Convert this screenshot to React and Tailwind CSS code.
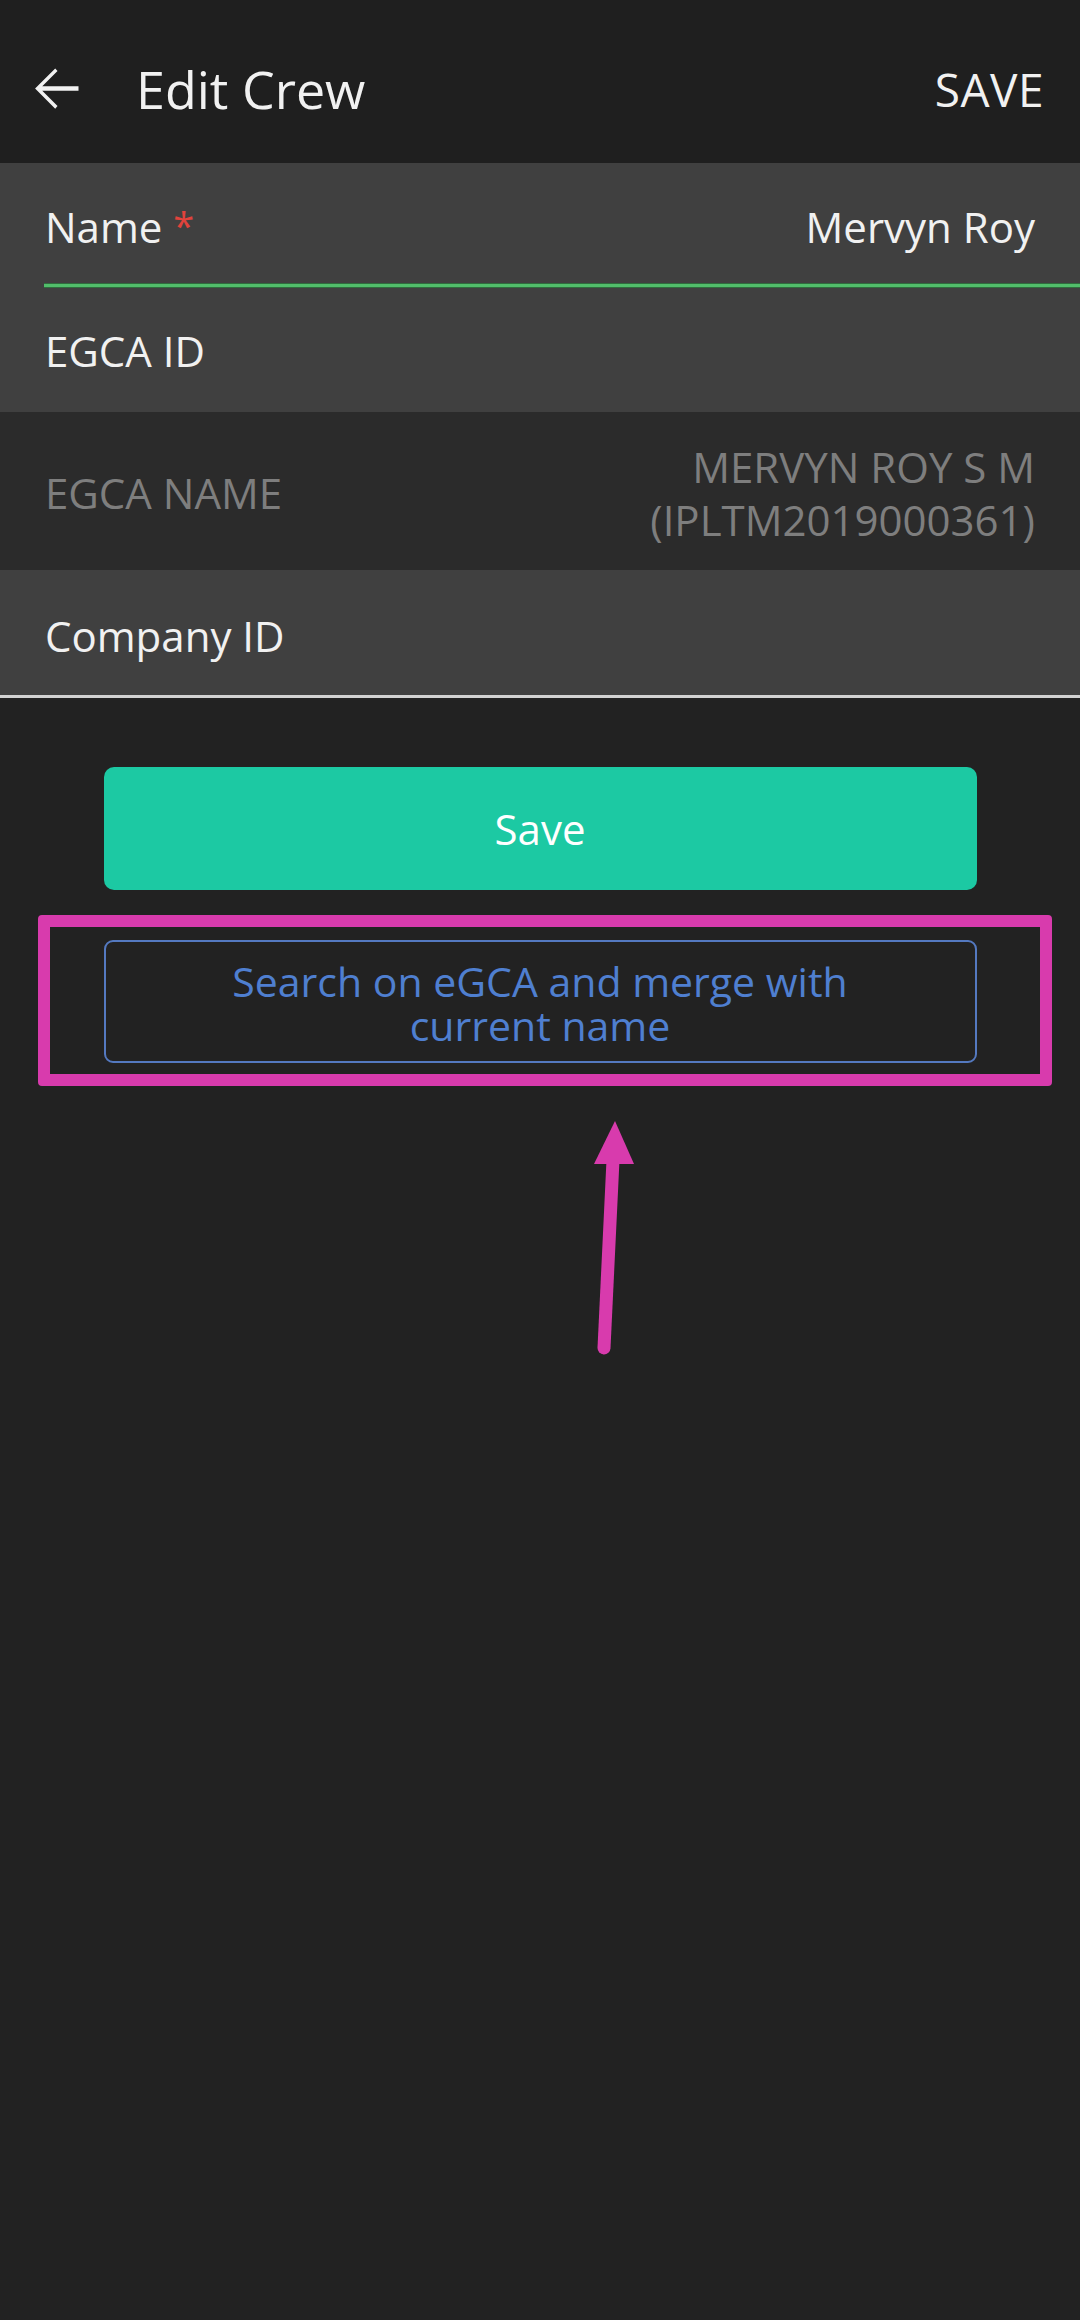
import React from "react";

export default function App() {
  return (
    <div className="w-[1080px] min-h-[2320px] bg-[#222222] font-['Open_Sans','Noto_Sans',sans-serif] text-[#f1f1f1]">
      {/* Header */}
      <div className="flex h-[163px] items-center bg-[#1f1f1f] pl-[21px] pr-[36px] pt-[14px]">
        <svg viewBox="0 0 24 24" className="h-[69px] w-[69px]" fill="#f1f1f1">
          <path d="M20 11.2H7.4l5.3-5.3L11.9 5 4.9 12l7 7 .8-.9-5.3-5.3H20v-1.6z" />
        </svg>
        <div className="ml-[46px] text-[52px] leading-none text-[#f1f1f1]">Edit Crew</div>
        <div className="ml-auto text-[46px] leading-none font-medium tracking-[0.5px] text-[#f1f1f1]">SAVE</div>
      </div>

      {/* Name */}
      <div className="bg-[#404040]">
        <div className="flex h-[120px] items-center justify-between pl-[45px] pr-[45px] pt-[7px] text-[42px] leading-none">
          <div>
            Name <span className="text-[#e0433c] text-[38px] align-top">*</span>
          </div>
          <div>Mervyn Roy</div>
        </div>
        <div className="ml-[44px] h-[5px] border-y border-[#2f6e3e] bg-[#52be6b]" />
        <div className="flex h-[124px] items-center pl-[45px] pt-[2px] text-[42px] leading-none">
          EGCA ID
        </div>
      </div>

      {/* EGCA NAME */}
      <div className="flex h-[158px] items-center justify-between bg-[#2b2b2b] pl-[45px] pr-[45px] pt-[3px] text-[42px] text-[#7e7e7e]">
        <div className="leading-none">EGCA NAME</div>
        <div className="text-right leading-[53px]">
          MERVYN ROY S M
          <br />
          (IPLTM2019000361)
        </div>
      </div>

      {/* Company ID */}
      <div className="flex h-[125px] items-center bg-[#404040] pl-[45px] pt-[6px] text-[42px] leading-none">
        Company ID
      </div>
      <div className="h-[3px] bg-[#d2d2d2]" />

      {/* Buttons */}
      <div className="relative pt-[69px]">
        <div className="mx-auto flex h-[123px] w-[873px] items-center justify-center rounded-[10px] bg-[#1cc9a3] text-[42px] leading-none text-white">
          Save
        </div>

        <div className="relative mt-[50px]">
          <div className="mx-auto flex h-[123px] w-[873px] items-center justify-center rounded-[9px] border-2 border-[#5479c0] pt-[2px] text-center text-[41px] leading-[44px] text-[#4f7fd0]">
            <p>
              Search on eGCA and merge with
              <br />
              current name
            </p>
          </div>
          {/* annotation rectangle */}
          <div className="pointer-events-none absolute left-[38px] top-[-25px] h-[171px] w-[1014px] rounded-[4px] border-[12px] border-[#d83bad]" />
        </div>

        {/* annotation arrow */}
        <svg
          className="pointer-events-none absolute left-[580px] top-[418px] h-[245px] w-[70px]"
          viewBox="0 0 70 245"
        >
          <line x1="24" y1="232" x2="33" y2="44" stroke="#d83bad" strokeWidth="13" strokeLinecap="round" />
          <polygon points="35,5 14,48 54,48" fill="#d83bad" />
        </svg>
      </div>
    </div>
  );
}
